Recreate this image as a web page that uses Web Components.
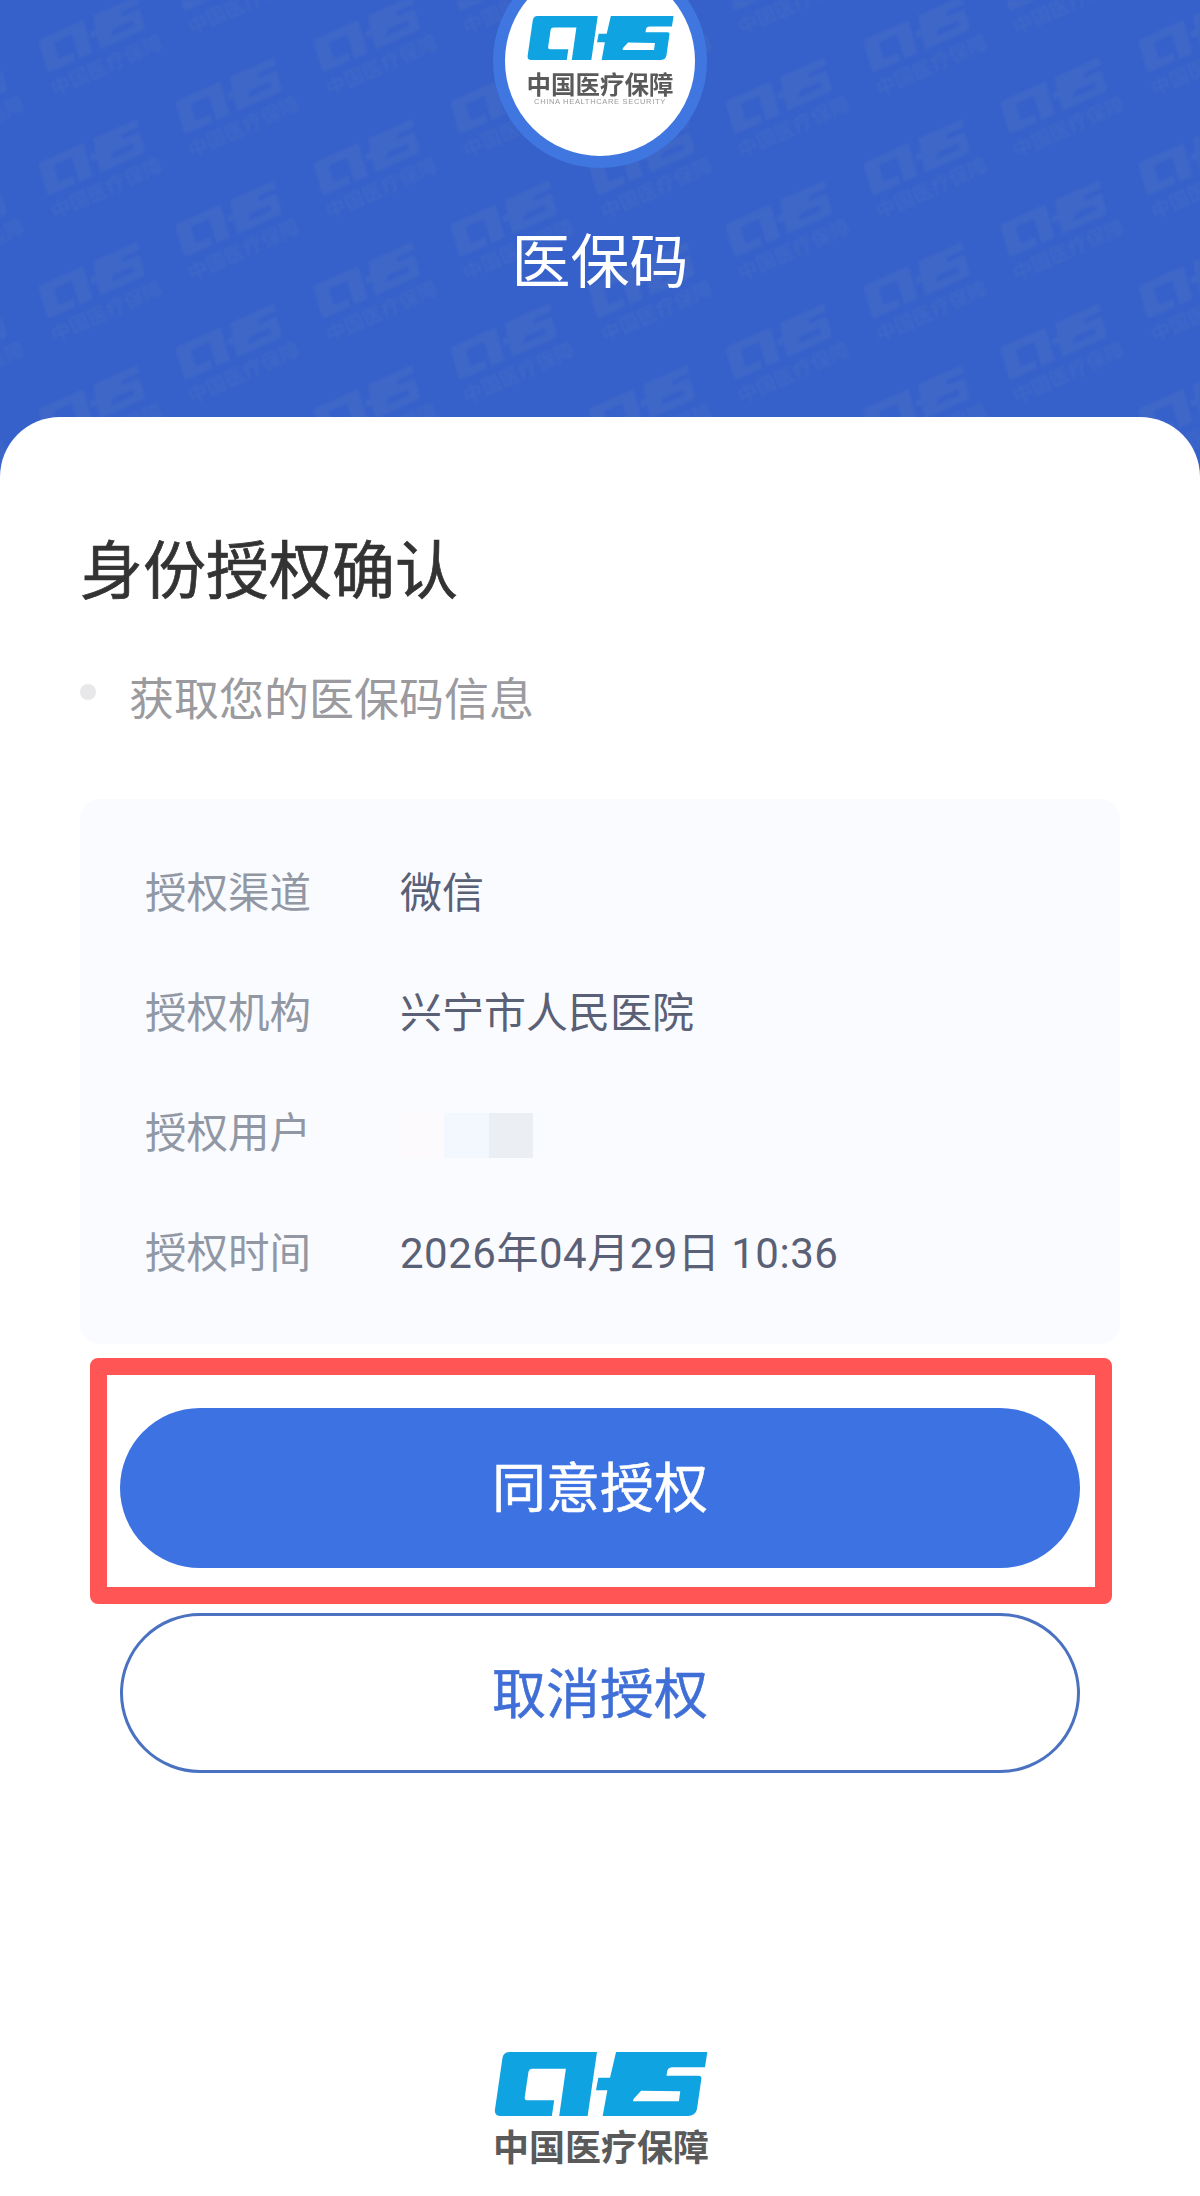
<!DOCTYPE html>
<html lang="zh-CN">
<head>
<meta charset="utf-8">
<title>医保码</title>
<style>
  html, body { margin: 0; padding: 0; background: #fff; }
  body { font-family: "Noto Sans CJK SC", "Noto Sans", sans-serif; width: 1200px; height: 2196px; overflow: hidden; }
</style>
</head>
<body>
<nhsa-page>
  <nhsa-header slot="header" heading="医保码"></nhsa-header>
  <nhsa-sheet slot="sheet" heading="身份授权确认" note="获取您的医保码信息">
    <info-row label="授权渠道">微信</info-row>
    <info-row label="授权机构">兴宁市人民医院</info-row>
    <info-row label="授权用户"><masked-name></masked-name></info-row>
    <info-row label="授权时间"><span style="letter-spacing:.5px">2026年04月29日 10:36</span></info-row>
  </nhsa-sheet>
</nhsa-page>

<script>
const CHS_PATH = "M55 20L318 20L290 212L205 212L225 70L125 70Q115 70 113 80L102 155Q101 165 110 165L190 165L183 212L30 212Q10 212 13 192L35 40Q38 20 55 20Z" +
  "M375 20L648 20L641 66L545 66Q530 66 528 78L526 91L622 91Q632 92 630 102L617 192Q612 212 590 212L335 212L349 135L315 135L322 97L357 97Z" +
  "M450 136L567 138L563 168L428 168Q424 168 428 160Z";

class ChsLogo extends HTMLElement {
    constructor() {
        super();
        this.shadowDOM = this.attachShadow({mode: "open"});
    }

    connectedCallback() {
        this.shadowDOM.innerHTML = `
          <style>
            :host { display: block; line-height: 0; }
            svg { width: 100%; height: 100%; display: block; }
          </style>
          <svg viewBox="10 20 640 192" preserveAspectRatio="none"><path fill="#0fa3e2" fill-rule="evenodd" d="${CHS_PATH}"/></svg>`;
    }
}

class NhsaHeader extends HTMLElement {
    constructor() {
        super();
        this.shadowDOM = this.attachShadow({mode: "open"});
    }

    // watermark tiles, two staggered columns repeating every 275 x 123
    marks() {
        let out = "";
        for (let col = -1; col < 6; col++) {
            for (let row = -1; row < 6; row++) {
                out += `<use href="#mark" x="${93 + col * 275}" y="${40 + row * 123}"/>`;
                out += `<use href="#mark" x="${230 + col * 275}" y="${101.5 + row * 123}"/>`;
            }
        }
        return out;
    }

    connectedCallback() {
        this.shadowDOM.innerHTML = `
          <style>
            :host {
              display: flex;
              flex-direction: column;
              align-items: center;
              position: relative;
              height: 477px;
              overflow: hidden;
              background: #3761ca;
            }
            .marks { position: absolute; left: 0; top: 0; width: 1200px; height: 477px; filter: blur(1.2px); }
            .ring {
              position: relative;
              box-sizing: border-box;
              flex: none;
              width: 214px;
              height: 214px;
              margin-top: -46px;
              border: 12.5px solid #4076e0;
              border-radius: 50%;
              background: #fff;
              display: flex;
              flex-direction: column;
              align-items: center;
              padding-top: 50px;
            }
            chs-logo { width: 147px; height: 44px; }
            .cn { margin-top: 11px; font-size: 24.5px; line-height: 26px; font-weight: 700; color: #5a5a5a; white-space: nowrap; }
            .en { font-family: "Liberation Sans", sans-serif; font-size: 7.6px; line-height: 10px; letter-spacing: .62px; color: #9a9a9a; white-space: nowrap; }
            h1 {
              position: relative;
              margin: 50px 0 0;
              font-size: 59px;
              line-height: 80px;
              font-weight: 400;
              color: #fff;
            }
          </style>
          <svg class="marks" viewBox="0 0 1200 477" aria-hidden="true">
            <defs>
              <g id="mark" fill="#3e67c8">
                <g transform="rotate(-24) translate(0 6)">
                  <path fill-rule="evenodd" transform="translate(-57 -32) scale(.178 .178)" d="${CHS_PATH}"/>
                  <text x="2" y="30" text-anchor="middle" font-size="20" font-weight="700" font-family="Noto Sans CJK SC">中国医疗保障</text>
                </g>
              </g>
            </defs>
            ${this.marks()}
          </svg>
          <div class="ring">
            <chs-logo></chs-logo>
            <div class="cn">中国医疗保障</div>
            <div class="en">CHINA HEALTHCARE SECURITY</div>
          </div>
          <h1>${this.getAttribute("heading")}</h1>`;
    }
}

class InfoRow extends HTMLElement {
    constructor() {
        super();
        this.shadowDOM = this.attachShadow({mode: "open"});
    }

    connectedCallback() {
        this.shadowDOM.innerHTML = `
          <style>
            :host { display: flex; align-items: center; height: 60px; font-size: 41.5px; line-height: 60px; }
            .label { width: 255px; flex: none; color: #9197a3; }
            .value { font-size: 42px; font-family: Roboto, "Noto Sans CJK SC", sans-serif; color: #5a6075; white-space: nowrap; display: flex; align-items: center; margin-top: 7px; }
          </style>
          <div class="label">${this.getAttribute("label")}</div>
          <div class="value"><slot></slot></div>`;
    }
}

class MaskedName extends HTMLElement {
    constructor() {
        super();
        this.shadowDOM = this.attachShadow({mode: "open"});
    }

    connectedCallback() {
        this.shadowDOM.innerHTML = `
          <style>
            :host { display: flex; width: 133px; height: 45px; margin-top: 4px; }
            i { flex: 1; }
            i:nth-of-type(1) { background: #fdfafd; }
            i:nth-of-type(2) { background: #f3f8fe; }
            i:nth-of-type(3) { background: #ebeef2; }
          </style>
          <i></i><i></i><i></i>`;
    }
}

class ActionButton extends HTMLElement {
    constructor() {
        super();
        this.shadowDOM = this.attachShadow({mode: "open"});
    }

    connectedCallback() {
        this.shadowDOM.innerHTML = `
          <style>
            :host {
              display: flex;
              box-sizing: border-box;
              align-items: center;
              justify-content: center;
              width: 960px;
              height: 160px;
              padding-bottom: 8px;
              border-radius: 80px;
              font-size: 54px;
              font-weight: 400;
              -webkit-text-stroke: .5px currentColor;
              background: #3d72e3;
              color: #fff;
            }
            :host([outline]) {
              padding-bottom: 6px;
              background: #fff;
              border: 3px solid #4a72c0;
              color: #3f6fd6;
            }
          </style>
          <slot></slot>`;
    }
}

class NhsaSheet extends HTMLElement {
    constructor() {
        super();
        this.shadowDOM = this.attachShadow({mode: "open"});
    }

    connectedCallback() {
        this.shadowDOM.innerHTML = `
          <style>
            :host {
              display: block;
              position: relative;
              box-sizing: border-box;
              height: 1779px;
              margin-top: -60px;
              padding: 104px 80px 0;
              border-radius: 60px 60px 0 0;
              background: #fff;
            }
            h2 { margin: 0; font-size: 63px; line-height: 90px; font-weight: 400; -webkit-text-stroke: .7px currentColor; color: #333; }
            .note { display: flex; align-items: center; gap: 33px; margin-top: 56px; height: 60px; font-size: 45px; line-height: 60px; color: #9a9a9f; }
            .note i { width: 16px; height: 16px; margin-top: -10px; border-radius: 50%; background: #e8e8ea; }
            .info {
              display: flex;
              flex-direction: column;
              gap: 60px;
              box-sizing: border-box;
              width: 1040px;
              height: 545px;
              margin-top: 72px;
              padding: 61px 65px 0;
              border-radius: 20px;
              background: #fafbff;
            }
            .mark {
              box-sizing: border-box;
              width: 1022px;
              height: 246px;
              margin: 14px 0 0 10px;
              padding: 33px 0 0 13px;
              border: 17px solid #ff5555;
              border-radius: 8px;
            }
            .cancel { margin: 9px 0 0 40px; }
            .brand { display: flex; flex-direction: column; align-items: center; margin: 279px 0 0 -80px; width: 1200px; }
            .brand chs-logo { width: 214px; height: 64px; margin-right: -1px; }
            .brand div { margin-top: 9px; font-size: 36px; line-height: 40px; font-weight: 700; color: #5a5a5a; margin-left: 2px; }
          </style>
          <h2>${this.getAttribute("heading")}</h2>
          <div class="note"><i></i><span>${this.getAttribute("note")}</span></div>
          <div class="info"><slot></slot></div>
          <div class="mark"><action-button>同意授权</action-button></div>
          <action-button class="cancel" outline>取消授权</action-button>
          <div class="brand"><chs-logo></chs-logo><div>中国医疗保障</div></div>`;
    }
}

class NhsaPage extends HTMLElement {
    constructor() {
        super();
        this.shadowDOM = this.attachShadow({mode: "open"});
        this.shadowDOM.innerHTML = `
          <style>
            :host { display: block; width: 1200px; height: 2196px; overflow: hidden; }
          </style>
          <slot name="header"></slot>
          <slot name="sheet"></slot>`;
    }
}

customElements.define("chs-logo", ChsLogo);
customElements.define("info-row", InfoRow);
customElements.define("masked-name", MaskedName);
customElements.define("action-button", ActionButton);
customElements.define("nhsa-header", NhsaHeader);
customElements.define("nhsa-sheet", NhsaSheet);
customElements.define("nhsa-page", NhsaPage);
</script>
</body>
</html>
